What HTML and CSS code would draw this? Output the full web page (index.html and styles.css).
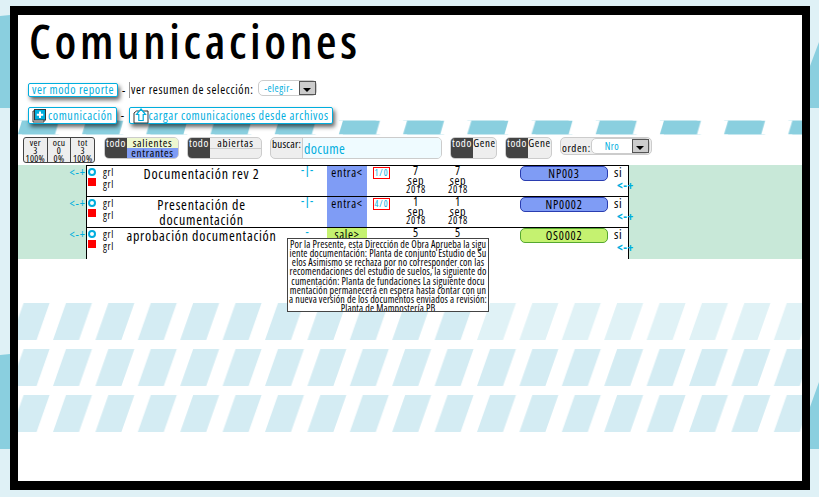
FILE: index.html
```html
<!DOCTYPE html>
<html lang="es">
<head>
<meta charset="utf-8">
<title>Comunicaciones</title>
<link rel="stylesheet" href="styles.css">
</head>
<body>
<svg class="backdrop" width="819" height="497" aria-hidden="true">
  <path class="bd-dark" d="M0 16 L10 15 V108 H0 Z M0 355 L10 354 V449 H0 Z M819 42 L810 66 V108 H819 Z M819 382 L810 407 V449 H819 Z"/>
</svg>
<main class="frame">
  <svg class="stripes" width="784" height="466" aria-hidden="true">
    <defs>
      <pattern id="top" patternUnits="userSpaceOnUse" width="64.2" height="14" x="4" y="105.5">
        <polygon fill="#8acfdf" points="0,0 37,0 33,14 -4,14"/>
        <polygon fill="#8acfdf" points="64.2,0 101,0 97,14 60,14"/>
      </pattern>
      <pattern id="mid" patternUnits="userSpaceOnUse" width="42.4" height="37" x="-7.4" y="288">
        <polygon fill="#d4ecf3" points="13,0 39,0 26,37 0,37"/>
      </pattern>
      <pattern id="pale" patternUnits="userSpaceOnUse" width="42.4" height="37" x="-7.4" y="288">
        <polygon fill="#e0f2f6" points="13,0 39,0 26,37 0,37"/>
      </pattern>
    </defs>
    <rect x="0" y="105.5" width="784" height="14" fill="url(#top)"/>
    <rect x="0" y="288" width="458" height="37" fill="url(#mid)"/>
    <rect x="458" y="288" width="326" height="37" fill="url(#pale)"/>
    <g transform="translate(0 46)"><rect x="0" y="288" width="784" height="37" fill="url(#mid)"/></g>
    <g transform="translate(0 92)"><rect x="0" y="288" width="784" height="37" fill="url(#mid)"/></g>
  </svg>

  <h1 class="title">Comunicaciones</h1>

  <div class="bar bar-one">
    <a class="btn">ver modo reporte</a>
    <span class="dash">-</span>
    <span class="summary">ver resumen de selección:</span>
    <span class="select select-wide">
      <span class="select-value">-elegir-</span>
      <span class="select-arrow"></span>
    </span>
  </div>

  <div class="bar bar-two">
    <a class="btn btn-icon">
      <svg class="ico" width="15" height="15" viewBox="0 0 15 15">
        <path d="M3 3 H1 V14 H12 V12" fill="none" stroke="#333" stroke-width="1"/>
        <rect x="2.5" y="1.5" width="11" height="10.5" fill="#00aede" stroke="#333"/>
        <path d="M8 3.5 V10 M4.8 6.8 H11.2" stroke="#fff" stroke-width="2"/>
      </svg>
      comunicación
    </a>
    <span class="dash">-</span>
    <a class="btn btn-icon btn-upload">
      <svg class="ico" width="16" height="16" viewBox="0 0 16 16">
        <path d="M1 5 L3.5 3 H15 V15 H1 Z" fill="#fff" stroke="#333"/>
        <path d="M8 1 L12.5 6.5 H10.2 V12.5 H5.8 V6.5 H3.5 Z" fill="#fff" stroke="#00aede" stroke-width="1.2"/>
      </svg>cargar comunicaciones desde archivos
    </a>
  </div>

  <div class="filters">
    <div class="stats">
      <div class="stat">ver<br>3<br>100%</div>
      <div class="stat">ocu<br>0<br>0%</div>
      <div class="stat">tot<br>3<br>100%</div>
    </div>
    <div class="seg seg-wide">
      <span class="seg-all">todo</span>
      <span class="seg-opts">
        <span class="opt opt-green">salientes</span>
        <span class="opt opt-blue">entrantes</span>
      </span>
    </div>
    <div class="seg seg-wide">
      <span class="seg-all">todo</span>
      <span class="seg-opts">
        <span class="opt opt-line">abiertas</span>
        <span class="opt"></span>
      </span>
    </div>
    <div class="search">
      <span class="search-label">buscar:</span>
      <span class="search-input">docume</span>
    </div>
    <div class="seg seg-small">
      <span class="seg-all">todo</span>
      <span class="seg-gene">Gene</span>
    </div>
    <div class="seg seg-small">
      <span class="seg-all">todo</span>
      <span class="seg-gene">Gene</span>
    </div>
    <div class="order">
      <span class="order-label">orden:</span>
      <span class="select select-order">
        <span class="select-value">Nro</span>
        <span class="select-arrow"></span>
      </span>
    </div>
  </div>

  <section class="list">
    <div class="row">
      <div class="gutter gutter-left">&lt;-+</div>
      <div class="cells">
        <div class="marks"><span class="ring"></span><span class="square"></span></div>
        <div class="grl">grl<br>grl</div>
        <div class="name">Documentación rev 2</div>
        <div class="sep">-|-</div>
        <div class="dir dir-in">entra&lt;</div>
        <div class="count"><span class="count-box">1/0</span></div>
        <div class="date">7<br>sep<small>2018</small></div>
        <div class="date">7<br>sep<small>2018</small></div>
        <div class="spacer"></div>
        <div class="pill pill-blue">NP003</div>
        <div class="end">si<span class="end-link">&lt;-+</span></div>
      </div>
      <div class="gutter"></div>
    </div>

    <div class="row">
      <div class="gutter gutter-left">&lt;-+</div>
      <div class="cells">
        <div class="marks"><span class="ring"></span><span class="square"></span></div>
        <div class="grl">grl<br>grl</div>
        <div class="name">Presentación de documentación</div>
        <div class="sep">-|-</div>
        <div class="dir dir-in">entra&lt;</div>
        <div class="count"><span class="count-box">4/0</span></div>
        <div class="date">1<br>sep<small>2018</small></div>
        <div class="date">1<br>sep<small>2018</small></div>
        <div class="spacer"></div>
        <div class="pill pill-blue">NP0002</div>
        <div class="end">si<span class="end-link">&lt;-+</span></div>
      </div>
      <div class="gutter"></div>
    </div>

    <div class="row row-last">
      <div class="gutter gutter-left">&lt;-+</div>
      <div class="cells">
        <div class="marks"><span class="ring"></span><span class="square"></span></div>
        <div class="grl">grl<br>grl</div>
        <div class="name">aprobación documentación</div>
        <div class="sep">-</div>
        <div class="dir dir-out">sale&gt;</div>
        <div class="count"></div>
        <div class="date">5</div>
        <div class="date">5</div>
        <div class="spacer"></div>
        <div class="pill pill-green">OS0002</div>
        <div class="end">si<span class="end-link">&lt;-+</span></div>
      </div>
      <div class="gutter"></div>
      <div class="tooltip">Por la Presente, esta Dirección de Obra Aprueba la sigu<br>iente documentación: Planta de conjunto Estudio de Su<br>elos Asimismo se rechaza por no corresponder con las<br>recomendaciones del estudio de suelos, la siguiente do<br>cumentación: Planta de fundaciones La siguiente docu<br>mentación permanecerá en espera hasta contar con un<br>a nueva versión de los documentos enviados a revisión:<br>Planta de Mampostería PB</div>
    </div>
  </section>
</main>
</body>
</html>
```
FILE: styles.css
```css
* { box-sizing: border-box; }
html, body { margin: 0; height: 497px; overflow: hidden; }
body {
  position: relative;
  background: #dff1f6;
  padding: 6px 9px 7px 10px;
  font-family: "Open Sans", "Noto Sans", sans-serif;
  font-stretch: 75%;
  color: #000;
}
.backdrop { position: absolute; left: 0; top: 0; }
.bd-dark { fill: #8acfdf; }
.frame {
  position: relative;
  height: 484px;
  background: #fff;
  border: solid #000;
  border-width: 9px 8px;
  overflow: hidden;
}
.stripes { position: absolute; left: 0; top: 0; }
.title {
  position: relative;
  margin: 0;
  padding: 0 0 0 11px;
  height: 59px;
  font-size: 47px;
  line-height: 52px;
  font-weight: 600;
  letter-spacing: 3.7px;
}
.bar { position: relative; display: flex; align-items: center; padding-left: 10px; font-size: 12px; letter-spacing: .6px; }
.bar-one { height: 14px; margin-top: 9px; }
.bar-two { height: 17px; margin-top: 10px; letter-spacing: .62px; }
.btn {
  display: flex;
  align-items: center;
  height: 100%;
  padding: 0 3px;
  background: #fff;
  color: #00aede;
  border: 1px solid #00aede;
  border-radius: 2px;
  box-shadow: 2px 3px 4px rgba(0,0,0,.6);
  line-height: 12px;
}
.btn-icon { gap: 1px; padding: 0 3px; }
.btn-upload { gap: 0; }
.ico { flex: none; }
.dash { width: 12px; text-align: center; }
.summary { border-left: 1px solid #999; line-height: 16px; margin-left: -1px; padding-left: 1px; letter-spacing: .62px; }
.select {
  display: flex;
  align-items: center;
  background: #fff;
  border: 1px solid #ccc;
  border-radius: 5px;
  color: #00aede;
  font-size: 10px;
  letter-spacing: .5px;
}
.select-wide { width: 59px; height: 16px; margin: 0 0 4px 4px; }
.select-order { width: 59px; height: 16px; margin-left: auto; margin-right: 1px; }
.select-value { flex: 1; text-align: center; }
.select-arrow {
  position: relative;
  flex: none;
  width: 17px;
  height: 14px;
  background: #ccc;
  border: 1px solid #555;
}
.select-arrow::after {
  content: "";
  position: absolute;
  left: 3px;
  top: 6px;
  border: solid transparent;
  border-width: 4px 4px 0;
  border-top-color: #000;
}
.filters {
  position: relative;
  display: flex;
  align-items: flex-start;
  height: 28px;
  margin-top: 13px;
  padding-left: 5px;
  font-size: 11px;
  letter-spacing: .6px;
}
.stats {
  display: flex;
  width: 72px;
  height: 26px;
  background: #eee;
  border: 1px solid #444;
  border-radius: 3px;
  font-size: 9.5px;
  line-height: 8px;
  letter-spacing: .3px;
  text-align: center;
  margin-right: 9px;
}
.stat { flex: 1; padding-top: 1px; border-left: 1px solid #444; }
.stat:first-child { border-left: 0; }
.seg { display: flex; height: 22px; background: #eee; border: 1px solid #ccc; border-radius: 5px; overflow: hidden; }
.seg-wide { width: 75px; margin-right: 8px; }
.seg-small { width: 47px; margin-right: 8px; }
.seg-all { flex: none; width: 22px; background: #444; color: #fff; line-height: 9px; text-align: center; }
.seg-opts { flex: 1; display: flex; flex-direction: column; }
.opt { flex: 1; text-align: center; line-height: 10px; letter-spacing: .7px; }
.opt-green { background: #eef8d0; }
.opt-blue { background: #7f9cf5; }
.opt-line { border-bottom: 1px solid #ccc; }
.seg-gene { flex: 1; line-height: 9px; text-align: center; }
.search {
  display: flex;
  width: 172px;
  height: 22px;
  margin-right: 8px;
  background: #eee;
  border: 1px solid #ccc;
  border-radius: 5px;
  overflow: hidden;
  line-height: 12px;
}
.search-label { flex: none; width: 31px; padding-left: 1px; letter-spacing: .2px; }
.search-input {
  flex: 1;
  background: #effbff;
  border-left: 1px solid #ccc;
  color: #00aede;
  font-size: 14px;
  line-height: 21px;
  letter-spacing: .4px;
  padding-left: 1px;
}
.order {
  display: flex;
  align-items: center;
  width: 92px;
  height: 18px;
  padding-left: 1px;
  background: #eee;
  border: 1px solid #ccc;
  border-radius: 5px;
}
.order-label { padding-top: 3px; }
.list { position: relative; }
.row { position: relative; display: flex; height: 31px; }
.row-last { height: 32px; }
.gutter { flex: none; width: 173px; background: #c8e8d8; }
.gutter-left {
  width: 68px;
  padding-top: 1px;
  text-align: right;
  color: #00aede;
  font-size: 12px;
  line-height: 14px;
  letter-spacing: 1px;
}
.cells {
  flex: none;
  display: grid;
  grid-template-columns: 14px 14px 173px 39px 40px 28px 42px 42px 41px 88px 21px;
  width: 543px;
  background: #fff;
  border: solid #000;
  border-width: 1px 1px 0;
  font-size: 12px;
  letter-spacing: .7px;
}
.ring {
  display: block;
  width: 8px;
  height: 8px;
  margin: 2px 0 0 1px;
  border: 2px solid #00aede;
  border-radius: 50%;
}
.square { display: block; width: 8px; height: 8px; margin: 2px 0 0 1px; background: #f00; }
.grl { font-size: 10px; line-height: 12px; padding: 0 0 0 2px; }
.name { font-size: 14px; line-height: 15px; letter-spacing: .75px; text-align: center; }
.sep { color: #00aede; font-size: 11px; font-weight: 600; line-height: 8px; text-align: center; }
.dir { text-align: center; line-height: 13px; }
.dir-in { background: #7f9cf5; }
.dir-out { background: #c5f270; }
.count { padding: 1px 0 0 6px; }
.count-box {
  display: block;
  width: 17px;
  height: 12px;
  border: 1px solid #f00;
  color: #00aede;
  font-size: 9px;
  line-height: 10px;
  letter-spacing: 1px;
  text-align: center;
}
.date { font-size: 12px; line-height: 9.5px; text-align: center; }
.date small { display: block; font-size: 10px; line-height: 9.5px; }
.pill {
  height: 15px;
  border-radius: 5px;
  border: 1px solid;
  font-size: 12px;
  line-height: 13px;
  letter-spacing: .8px;
  text-align: center;
}
.pill-blue { background: #7f9cf5; border-color: #2a3db0; }
.pill-green { background: #c5f270; border-color: #55a830; }
.end { position: relative; padding-left: 6px; font-size: 13px; line-height: 13px; }
.end-link {
  position: absolute;
  left: 9px;
  top: 13px;
  color: #00aede;
  font-size: 12px;
  font-weight: 700;
  letter-spacing: .6px;
  white-space: nowrap;
}
.tooltip {
  position: absolute;
  left: 269px;
  top: 11px;
  z-index: 2;
  width: 202px;
  height: 74px;
  padding-top: 1px;
  background: #fff;
  border: 1px solid #444;
  font-size: 10px;
  line-height: 9.15px;
  letter-spacing: .14px;
  text-align: center;
  white-space: nowrap;
  overflow: hidden;
}
```
